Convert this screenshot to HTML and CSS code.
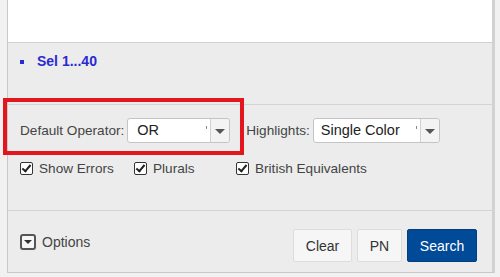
FILE: index.html
```html
<!DOCTYPE html>
<html lang="en">
<head>
    <meta charset="UTF-8">
    <title>Search Options</title>
    <link rel="stylesheet" href="styles.css">
</head>
<body>
    <div class="panel">
        <!-- result list area -->
        <div class="results"></div>

        <div class="sel-area">
            <ul class="sel-list">
                <li><a href="#">Sel 1...40</a></li>
            </ul>
        </div>

        <div class="options">
            <div class="row">
                <label class="field">Default Operator:
                    <span class="select op-select"><span class="value">OR</span><span class="caret"></span></span>
                </label>
                <label class="field">Highlights:
                    <span class="select hl-select"><span class="value">Single Color</span><span class="caret"></span></span>
                </label>
            </div>
            <div class="row checks">
                <label class="check c1"><span class="box"></span>Show Errors</label>
                <label class="check c2"><span class="box"></span>Plurals</label>
                <label class="check"><span class="box"></span>British Equivalents</label>
            </div>
            <!-- red highlight drawn over the operator field -->
            <div class="mark"></div>
        </div>

        <div class="footer">
            <a href="#" class="toggle"><span class="toggle-icon"></span>Options</a>
            <div class="buttons">
                <button class="btn clear">Clear</button>
                <button class="btn pn">PN</button>
                <button class="btn primary">Search</button>
            </div>
        </div>
    </div>
</body>
</html>
```

FILE: styles.css
```css
body {
    margin: 0;
    background-color: #f1f1f1;
    font-family: 'Liberation Sans', Arial, sans-serif;
    font-size: 13.6px;
    color: #444;
}
.panel {
    margin-left: 7px;
    width: 484px;
    height: 272px;
    background: #ececec;
    border-left: 1px solid #c8c8c8;
    border-right: 3px solid #d2d2d2;
    border-bottom: 1px solid #c8c8c8;
    display: flex;
    flex-direction: column;
}
.results {
    height: 42px;
    background: white;
    border-bottom: 1px solid #d0d0d0;
}
.sel-area {
    height: 61px;
    border-bottom: 1px solid #d4d4d4;
}
.sel-list {
    margin: 0;
    padding: 10px 0 0 27px;
    list-style: square;
    color: #2a2ad2;
    font-size: 14px;
}
.sel-list li {
    padding-left: 2px;
}
.sel-list a {
    color: #2a2ad2;
    font-weight: bold;
    text-decoration: none;
}
.options {
    position: relative;
    height: 105px;
    border-bottom: 1px solid #d4d4d4;
}
.row {
    display: flex;
    align-items: center;
    padding-left: 12px;
}
.row:first-child {
    padding-top: 13px;
}
.field {
    display: flex;
    align-items: center;
    gap: 3px;
    margin-right: 16px;
}
.field:last-child {
    margin-right: 0;
}
.select {
    display: flex;
    height: 23px;
    background: white;
    border: 1px solid #c4c4c4;
    border-radius: 3px;
    color: #222;
    font-size: 14.5px;
}
.select .value {
    flex: 1;
    padding: 3px 0 0 9px;
    position: relative;
}
.select .value::after {
    content: '';
    position: absolute;
    right: 3px;
    top: 7px;
    width: 1px;
    height: 3px;
    background: #888;
}
.op-select {
    width: 101px;
}
.hl-select {
    width: 125px;
}
.hl-select .value {
    padding-left: 7px;
}
.caret {
    width: 18px;
    background: #f3f3f3;
    border-left: 1px solid #d0d0d0;
    border-radius: 0 3px 3px 0;
    position: relative;
}
.caret::after {
    content: '';
    position: absolute;
    left: 4px;
    top: 10px;
    border-left: 5px solid transparent;
    border-right: 5px solid transparent;
    border-top: 5px solid #555;
}
.checks {
    margin-top: 18px;
}
.check {
    display: flex;
    align-items: center;
}
.c1 {
    width: 114px;
}
.c2 {
    width: 102px;
}
.box {
    width: 11px;
    height: 11px;
    border: 1px solid #333;
    border-radius: 2px;
    margin-right: 6px;
    position: relative;
    background: white;
}
.box::after {
    content: '';
    position: absolute;
    left: 3px;
    top: 0;
    width: 3px;
    height: 7px;
    border-right: 2px solid #222;
    border-bottom: 2px solid #222;
    transform: rotate(40deg);
}
.mark {
    position: absolute;
    left: -5px;
    top: -7px;
    width: 233px;
    height: 49px;
    border: 4px solid #e3161e;
}
.footer {
    flex: 1;
    display: flex;
    align-items: center;
    justify-content: space-between;
    padding: 0 15px 0 12px;
}
.toggle {
    display: flex;
    align-items: center;
    color: #444;
    text-decoration: none;
    font-size: 14px;
}
.toggle-icon {
    width: 12px;
    height: 12px;
    border: 2px solid #555;
    border-radius: 3px;
    margin-right: 6px;
    position: relative;
    background: #f6f6f6;
}
.toggle-icon::after {
    content: '';
    position: absolute;
    left: 2px;
    top: 4px;
    border-left: 4px solid transparent;
    border-right: 4px solid transparent;
    border-top: 4px solid #333;
}
.buttons {
    display: flex;
    gap: 5px;
    margin-top: 8px;
}
.btn {
    font-family: 'Liberation Sans', Arial, sans-serif;
    font-size: 14px;
    height: 33px;
    padding: 0;
    background: #f6f6f6;
    color: #333;
    border: 1px solid #dcdcdc;
    border-radius: 2px;
}
.clear {
    width: 59px;
}
.pn {
    width: 45px;
}
.btn.primary {
    width: 70px;
    background: #004a97;
    border-color: #003f82;
    color: white;
}
```
